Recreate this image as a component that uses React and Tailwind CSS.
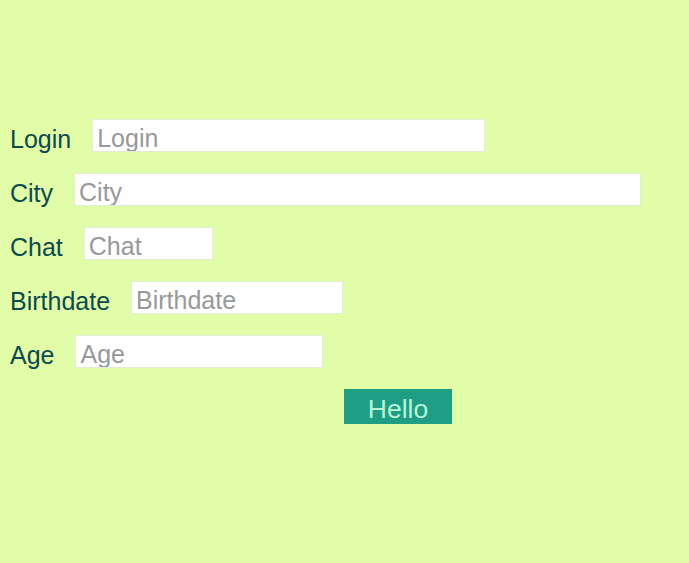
import React from "react";

const fields = [
  { name: "Login", width: "w-[393px]" },
  { name: "City", width: "w-[567px]" },
  { name: "Chat", width: "w-[129px]" },
  { name: "Birthdate", width: "w-[212px]" },
  { name: "Age", width: "w-[248px]" },
];

const App = () => {
  return (
    <div className="min-h-[563px] w-full bg-[#e2fda8] pt-[119px] pl-[10px] font-['Liberation_Sans',Arial,sans-serif]">
      <form className="flex flex-col gap-[21px]" onSubmit={(e) => e.preventDefault()}>
        {fields.map((field) => (
          <div key={field.name} className="flex items-center">
            <label className="text-[25px] leading-none text-[#0d4a4f] mr-[21px] pt-[7px]">
              {field.name}
            </label>
            <input
              type="text"
              placeholder={field.name}
              className={`${field.width} h-[33px] bg-white border border-[#e3ecd6] px-[4px] pt-[5px] text-[25px] leading-none text-gray-700 placeholder:text-[#999999] outline-none`}
            />
          </div>
        ))}
        <div className="pl-[334px]">
          <button
            type="submit"
            className="w-[108px] h-[35px] bg-[#1f9e85] text-[#b6f5d6] text-[26.5px] leading-none pt-[6px]"
          >
            Hello
          </button>
        </div>
      </form>
    </div>
  );
};

export default App;
